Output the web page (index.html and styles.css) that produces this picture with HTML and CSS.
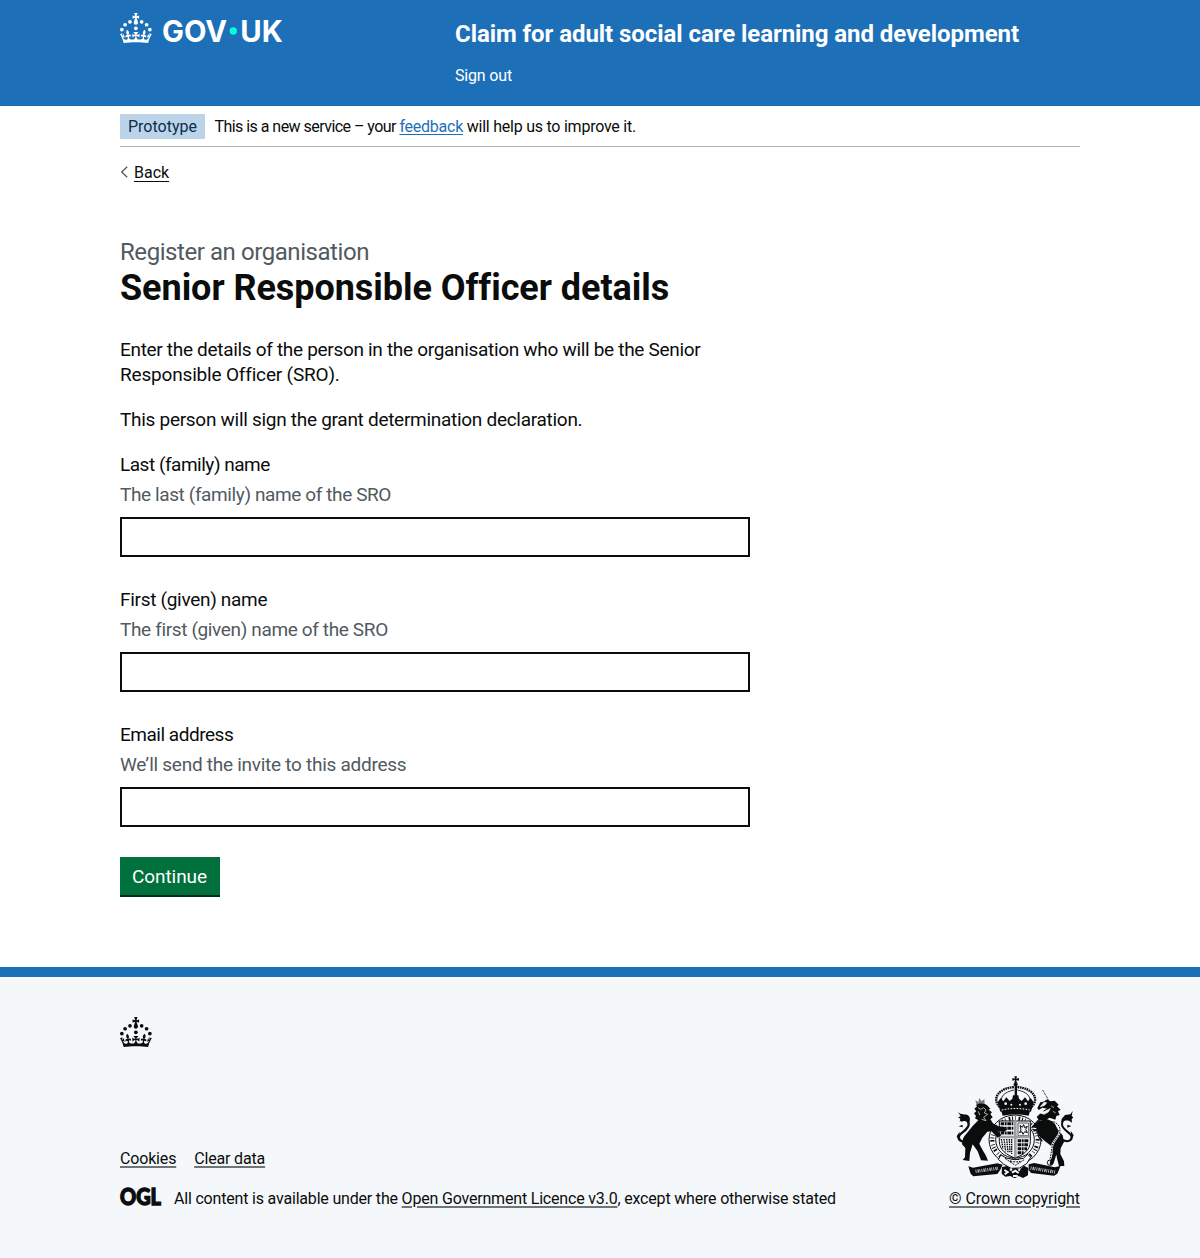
FILE: index.html
```html
<!DOCTYPE html>
<html lang="en">
<head>
<meta charset="utf-8">
<title>Senior Responsible Officer details</title>
<link rel="stylesheet" href="styles.css">
</head>
<body>
<svg width="0" height="0" class="sprite" aria-hidden="true">
  <symbol id="crown" viewBox="0 0 64 60">
    <circle cx="20" cy="17.6" r="3.7"/><circle cx="10.2" cy="23.5" r="3.7"/><circle cx="3.7" cy="33.2" r="3.7"/><circle cx="31.7" cy="30.6" r="3.7"/><circle cx="43.3" cy="17.6" r="3.7"/><circle cx="53.2" cy="23.5" r="3.7"/><circle cx="59.7" cy="33.2" r="3.7"/>
    <path d="M33.1,9.8c.2-.1.3-.3.5-.5l4.6,2.4v-6.8l-4.6,1.5c-.1-.2-.3-.3-.5-.5l1.9-5.9h-6.7l1.9,5.9c-.2.1-.3.3-.5.5l-4.6-1.5v6.8l4.6-2.4c.1.2.3.3.5.5l-2.6,8c-.9,2.8,1.2,5.7,4.1,5.7h0c3,0,5.1-2.9,4.1-5.7l-2.6-8ZM37,37.9s-3.4,3.8-4.1,6.1c2.2,0,4.2-.5,6.4-2.8l-.7,8.5c-2-2.8-4.4-4.1-5.7-3.8.1,3.1.5,6.7,5.8,7.2,3.7.3,6.7-1.5,7-3.8.4-2.6-2-4.3-3.7-1.6-1.4-4.5,2.4-6.1,4.9-3.2-1.9-4.5-1.8-7.7,2.4-10.9,3,4,2.6,7.3-1.2,11.1,2.4-1.3,6.2,0,4,4.6-1.2-2.8-3.7-2.2-4.2.2-.3,1.7.7,3.7,3,4.2,1.9.3,4.7-.9,7-5.9-1.3,0-2.4.7-3.9,1.7l2.4-8c.6,2.3,1.4,3.7,2.2,4.5.6-1.6.5-2.8,0-5.3l5,1.8c-2.6,3.6-5.2,8.7-7.3,17.5-7.4-1.1-15.7-1.7-24.5-1.7h0c-8.8,0-17.1.6-24.5,1.7-2.1-8.9-4.7-13.9-7.3-17.5l5-1.8c-.5,2.5-.6,3.7,0,5.3.8-.8,1.6-2.3,2.2-4.5l2.4,8c-1.5-1-2.6-1.7-3.9-1.7,2.3,5,5.2,6.2,7,5.9,2.3-.4,3.3-2.4,3-4.2-.5-2.4-3-3.1-4.2-.2-2.2-4.6,1.6-6,4-4.6-3.7-3.7-4.2-7.1-1.2-11.1,4.2,3.2,4.3,6.4,2.4,10.9,2.5-2.8,6.3-1.3,4.9,3.2-1.8-2.7-4.1-1-3.7,1.6.3,2.3,3.3,4.1,7,3.8,5.4-.5,5.7-4.2,5.8-7.2-1.3-.2-3.7,1-5.7,3.8l-.7-8.5c2.2,2.3,4.2,2.7,6.4,2.8-.7-2.3-4.1-6.1-4.1-6.1h10.6,0Z"/>
  </symbol>
</svg>

<header class="header">
  <div class="container header-row">
    <div class="header-logo">
      <svg width="162" height="30" viewBox="0 0 324 60" fill="#fff" role="img" aria-label="GOV.UK">
        <use href="#crown" width="64" height="60"/>
        <circle cx="226.6" cy="36" r="7.4" fill="#00ffe0"/>
        <text class="wordmark" x="84" y="57" textLength="130" lengthAdjust="spacingAndGlyphs">GOV</text>
        <text class="wordmark" x="240.5" y="57" textLength="85" lengthAdjust="spacingAndGlyphs">UK</text>
      </svg>
    </div>
    <div class="header-content">
      <a class="service-name" href="#">Claim for adult social care learning and development</a>
      <nav><a class="signout" href="#">Sign out</a></nav>
    </div>
  </div>
</header>

<div class="container">
  <div class="phase">
    <strong class="tag">Prototype</strong>
    <span class="phase-text"><span class="phase-lead">This is a new service – your </span><a href="#">feedback</a> will help us to improve it.</span>
  </div>
  <a class="back" href="#"><svg width="8" height="12" viewBox="0 0 8 12"><path d="M7.2 .8 1.7 6l5.5 5.2" fill="none" stroke="#505a5f" stroke-width="1.3"/></svg><span>Back</span></a>
  <main class="main">
    <span class="caption">Register an organisation</span>
    <h1>Senior Responsible Officer details</h1>
    <p>Enter the details of the person in the organisation who will be the Senior <span class="loose">Responsible Officer (SRO).</span></p>
    <p class="declaration">This person will sign the grant determination declaration.</p>
    <form>
      <div class="group">
        <label class="tight" for="last">Last (family) name</label>
        <div class="hint">The last (family) name of the SRO</div>
        <input id="last" type="text">
      </div>
      <div class="group">
        <label for="first">First (given) name</label>
        <div class="hint hint-first">The first (given) name of the SRO</div>
        <input id="first" type="text">
      </div>
      <div class="group">
        <label class="tight" for="email">Email address</label>
        <div class="hint hint-email">We’ll send the invite to this address</div>
        <input id="email" type="text">
      </div>
      <button type="button">Continue</button>
    </form>
  </main>
</div>

<footer class="footer">
  <div class="container">
    <svg class="footer-crown" width="32" height="30" fill="#0b0c0c"><use href="#crown" width="32" height="30"/></svg>
    <div class="meta">
      <div class="meta-main">
        <ul class="links"><li><a href="#">Cookies</a></li><li><a href="#">Clear data</a></li></ul>
        <div class="licence">
          <svg width="41" height="18" viewBox="0 0 41 18" role="img" aria-label="OGL"><text class="ogl" x="0" y="16.8" textLength="41" lengthAdjust="spacingAndGlyphs">OGL</text></svg>
          <span>All content is available under the <a href="#">Open Government Licence v3.0</a>, except where otherwise stated</span>
        </div>
      </div>
      <a class="copyright" href="#">
        <svg class="arms" width="125" height="102" viewBox="24 33 375 306" fill="#0b0c0c" aria-hidden="true">
          <!-- crown -->
          <path d="M208 34h8l-2 7 8-2v8l-8-2 2 8h-8l2-8-8 2v-8l8 2z"/>
          <circle cx="212" cy="58" r="6"/>
          <path d="M209 62h7v46h-7z"/>
          <path d="M164 126c-26-28 0-57 44-60M260 126c26-28 0-57-44-60" fill="none" stroke="#0b0c0c" stroke-width="7" stroke-dasharray="5 2"/>
          <path d="M172 117c-10-20 5-36 35-42M252 117c10-20-5-36-35-42" fill="none" stroke="#0b0c0c" stroke-width="2.5"/>
          <path d="M158 112l9-13 8 10 9-12 10 11 8-7 2-10h16l2 10 8 7 10-11 9 12 8-10 9 13-8 28c-28-7-64-7-92 0z"/>
          <path d="M168 135c28-7 60-7 88 0l-5 17c-24-5-54-5-78 0z"/>
          <path d="M170 135c28-6 56-6 84 0" fill="none" stroke="#f4f8fb" stroke-width="3" stroke-dasharray="5 4"/>
          <g fill="#f4f8fb"><circle cx="182" cy="116" r="4"/><circle cx="199" cy="119" r="3"/><circle cx="225" cy="119" r="3"/><circle cx="242" cy="116" r="4"/></g>
          <!-- garter -->
          <ellipse cx="210" cy="224" rx="78" ry="74" fill="#f4f8fb" stroke="#0b0c0c" stroke-width="3"/>
          <ellipse cx="210" cy="224" rx="68" ry="64" fill="none" stroke="#0b0c0c" stroke-width="12" stroke-dasharray="3 6 2 9 5 5"/>
          <ellipse cx="210" cy="224" rx="58" ry="55" fill="#f4f8fb" stroke="#0b0c0c" stroke-width="3"/>
          <!-- shield -->
          <path d="M163 168h93v61c0 26-21 41-46 50-25-9-47-24-47-50z" fill="#f4f8fb" stroke="#0b0c0c" stroke-width="3"/>
          <path d="M167 176h40M167 190h40M167 204h40M218 227h34M218 239h32M218 251h28M218 263h18" fill="none" stroke="#0b0c0c" stroke-width="9" stroke-dasharray="11 2 5 2"/>
          <path d="M219 174h32v38h-32z" fill="none" stroke="#0b0c0c" stroke-width="2"/>
          <path d="M225 181l7 6 4-8 3 9 8-4-5 9 5 10-8-3-5 8-3-8-8 3 5-8z" fill="none" stroke="#0b0c0c" stroke-width="3"/>
          <path d="M169 222l5 29m3-29 5 37m3-37 4 40m4-40 2 42m5-42v45" stroke="#0b0c0c" stroke-width="4" stroke-dasharray="5 2"/>
          <path d="M211 166v111M163 216h92" stroke="#9ca0a2" stroke-width="8"/>
          <!-- lion -->
          <path d="M95 120l-4-14 9 5 3-12 7 10 8-7 1 14z" fill="#777b7d"/>
          <path d="M92 121c10-8 27-7 36 1l8 9-5 3 10 8-5 5 7 10-7 6 8 12 14 9 21 2 7 8-9 7-18-3 10 13-11 7-19-19-12 1-15 18-9 18 8 16 12 20 6 15-21-1-10-27-15-21-8 25-2 25-20-3 7-8 1-28-10-11c1-12 4-23 12-30l20-25 17-17-10-6 3-7-6-8 7-6-6-8 9-8z"/>
          <path d="M99 128l8 5 9-5 7 7-5 9 10 4-12 9 7 10-13-4M104 150l-4-11" fill="none" stroke="#f4f8fb" stroke-width="2"/>
          <path d="M69 227c-18 6-31-1-27-14 5-12 29-17 29-35 0-12-10-17-24-11" fill="none" stroke="#0b0c0c" stroke-width="7"/>
          <path d="M39 141c9 10 22 5 30 10 7 6 7 14 4 22-5-8-11-10-22-9l-7 6 2-9-7-4 8-3zM35 214l9-14-3 26zM53 179l-12 5 12 3z"/>
          <!-- unicorn -->
          <path d="M293 75l17 29" stroke="#0b0c0c" stroke-width="3" stroke-dasharray="3 2"/>
          <path d="M307 103l9 6 13-2 12 12-5 5 11 10-8 5 5 11-10 3-3 11-17-6-13 8-20-1-6-9 10-10 8-1 4-9 9-5-14-3-11 7-4-6 9-17 9-2z"/>
          <path d="M286 125l11-13 8 1-6 8zM287 144l10 4 13-7 6-11M319 123l8 5M324 139l8 5" fill="#f4f8fb" stroke="#f4f8fb" stroke-width="2"/>
          <path d="M267 181l14-13 24-6 22 9 11 22 15 18 4 20-10 19-1 17 11 22 1 14h-16l-5-19-3-15-9 28-8 5-3-8 9-28-4-23-19-14-18-17-8-23-17-2z"/>
          <path d="M262 186l18-20 13-4M262 192l15 7 5 18 10 12" fill="none" stroke="#0b0c0c" stroke-width="4"/>
          <path d="M326 170c18 8 24 24 14 41l-17 25-4 24-4 24" fill="none" stroke="#f4f8fb" stroke-width="6"/>
          <path d="M326 170c18 8 24 24 14 41l-17 25-4 24-4 24" fill="none" stroke="#0b0c0c" stroke-width="3" stroke-dasharray="5 3"/>
          <circle cx="315" cy="293" r="8" fill="none" stroke="#0b0c0c" stroke-width="3"/>
          <path d="M353 225c17 8 30 1 26-12-5-13-28-18-28-35 0-11 8-19 20-20" fill="none" stroke="#0b0c0c" stroke-width="6"/>
          <path d="M383 138l-7 10-16 2-10 12-2 12c8-8 14-8 24-7l9 6-1-10 5-6-5-4zM386 211l-9-14 3 27zM367 179l12 4-12 5z"/>
          <!-- motto scroll and base -->
          <path d="M70 304l14 4 73-13 16 4-7 15-9 13-72 7-8-8z"/>
          <path d="M251 298l17-4 62 13 17-5-10 24-10 6-69-8-7-9z"/>
          <path d="M92 319l67-9M257 309l73 12" stroke="#f4f8fb" stroke-width="10" stroke-dasharray="2 4 3 3 2 4"/>
          <path d="M168 270l18 10 25 4 24-4 13-12 9 9-12 19-21 13-26 1-23-13-15-14z" fill="#f4f8fb" stroke="#0b0c0c" stroke-width="3"/>
          <path d="M180 280l31 21 28-18M194 290l8-9 18 2 5 8z" fill="none" stroke="#0b0c0c" stroke-width="3" stroke-dasharray="6 3"/>
          <path d="M171 306l16-3 11 10 13-4 14 4 12-11 13 7-1 22-15 8-13-6-12 7-13-7-15 2-11-9z"/>
          <path d="M178 315l10 6-9 7M201 323l10-6 10 7M204 333h14M196 311l4 6M224 312l-3 5" fill="none" stroke="#f4f8fb" stroke-width="6"/>
        </svg>
        <span>© Crown copyright</span>
      </a>
    </div>
  </div>
</footer>
</body>
</html>
```
FILE: styles.css
```css
* { box-sizing: border-box; }
body { margin: 0; background: #fff; color: #0b0c0c; font: 400 19px/25px Roboto, "Liberation Sans", sans-serif; letter-spacing: -0.31px; font-variant-ligatures: none; }
a { color: inherit; text-decoration-thickness: 1px; text-underline-offset: 2px; }
.sprite { position: absolute; }
.container { width: 960px; margin: 0 auto; }

.header { height: 106px; background: #1d70b8; color: #fff; }
.header-row { display: flex; }
.header-logo { width: 335px; padding-top: 13px; line-height: 0; }
.header-logo svg { overflow: visible; }
.wordmark { font: 650 59px Inter, sans-serif; letter-spacing: 0; }
.header-content { padding-top: 19px; }
.header-content a { text-decoration: none; }
.service-name { display: block; font-size: 24px; font-weight: 700; line-height: 30px; letter-spacing: -0.068px; }
.header-content nav { margin-top: 17px; font-size: 16px; line-height: 20px; letter-spacing: -0.17px; }
.signout { display: block; }

.phase { display: flex; align-items: center; height: 41px; gap: 9.5px; border-bottom: 1px solid #b1b4b6; font-size: 16px; line-height: 20px; }
.tag { height: 25px; padding: 3px 8px 2px; background: #bbd4ea; color: #0c2d4a; font-weight: 400; letter-spacing: 0; }
.phase-text { padding-top: 2px; letter-spacing: -0.24px; }
.phase-lead { letter-spacing: -0.54px; }
.phase-text a { color: #1d70b8; }
.back { display: flex; align-items: center; gap: 6px; width: max-content; margin-top: 16px; font-size: 16px; line-height: 20px; letter-spacing: 0; text-decoration: none; }
.back span { text-decoration: underline; text-decoration-thickness: 1px; text-underline-offset: 3px; }
.back svg { margin-top: -2px; }

.main { width: 630px; padding-top: 54px; }
.caption { display: block; color: #505a5f; font-size: 24px; line-height: 30px; letter-spacing: -0.435px; }
h1 { margin: 0 0 29px; padding-top: 1px; font-size: 36px; line-height: 40px; letter-spacing: -0.05px; }
p { margin: 0 0 20px; }
.loose { letter-spacing: -0.18px; }
.declaration { letter-spacing: -0.285px; }
.group { margin-bottom: 30px; }
label { display: block; margin-bottom: 5px; letter-spacing: -0.3px; }
.tight { letter-spacing: -0.48px; }
.hint { margin-bottom: 10px; color: #505a5f; letter-spacing: -0.39px; }
.hint-first { letter-spacing: -0.36px; }
.hint-email { letter-spacing: -0.27px; }
input { display: block; width: 100%; height: 40px; padding: 5px; border: 2px solid #0b0c0c; background: #fff; font: inherit; }
button { display: block; width: 100px; height: 38px; padding: 0 1px 0 0; border: 0; background: #00703c; box-shadow: 0 2px 0 #002d18; color: #fff; font: inherit; letter-spacing: -0.07px; }

.footer { height: 291px; margin-top: 72px; padding-top: 40px; border-top: 10px solid #1d70b8; background: #f4f8fb; font-size: 16px; line-height: 20px; }
.footer a { text-decoration-color: #6f7475; text-decoration-thickness: 2px; }
.footer-crown { display: block; }
.meta { display: flex; justify-content: space-between; align-items: flex-end; height: 162px; }
.links { display: flex; gap: 18px; margin: 0 0 20px; padding: 0; list-style: none; letter-spacing: -0.17px; }
.licence { display: flex; gap: 13px; letter-spacing: -0.188px; }
.licence svg { margin-top: -1px; overflow: visible; }
.ogl { font: 900 22px Lato, sans-serif; letter-spacing: 0; stroke: #0b0c0c; stroke-width: 1.3px; fill: #0b0c0c; }
.copyright { display: flex; flex-direction: column; align-items: center; gap: 11px; white-space: nowrap; letter-spacing: -0.09px; }
.footer .copyright { text-decoration: none; }
.arms { margin-left: 2px; }
.copyright span { text-decoration: underline 2px #6f7475; text-underline-offset: 2px; }
```
